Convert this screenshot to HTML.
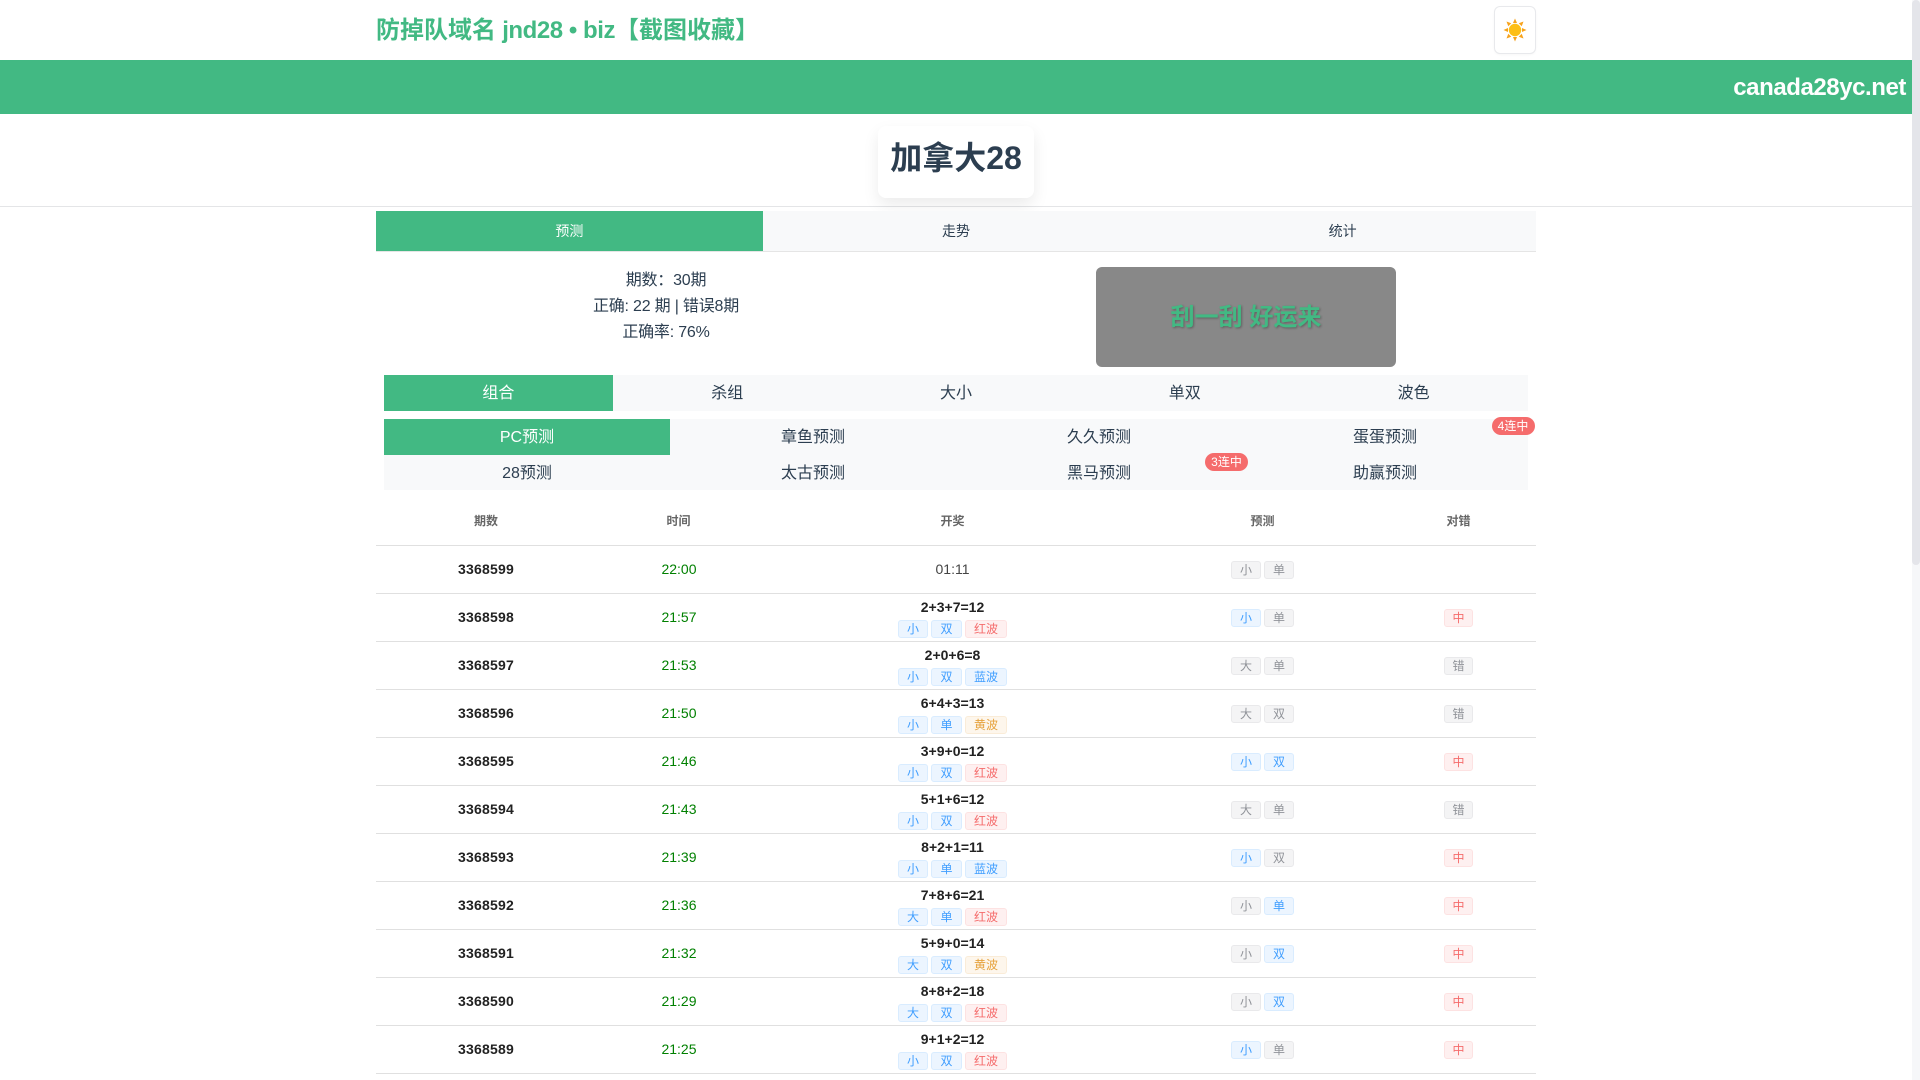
<!DOCTYPE html>
<html lang="zh">
<head>
<meta charset="utf-8">
<title>加拿大28</title>
<style>
*{box-sizing:border-box;margin:0;padding:0}
html,body{width:1920px;height:1080px;overflow:hidden;background:#fff}
body{position:relative;font-family:"Liberation Sans","Noto Sans CJK SC",sans-serif;color:#2c3e50;font-size:14px}
.abs{position:absolute}
.brand{left:376px;top:13px;height:36px;line-height:36px;font-size:24px;font-weight:700;color:#42b983;white-space:nowrap}
.brand span{letter-spacing:-.45px}
.sunbtn{left:1494px;top:6px;width:42px;height:48px;border:1px solid #e8e9ec;border-radius:6px;background:#fff;box-shadow:0 1px 2px rgba(0,0,0,.03)}
.sunbtn svg{position:absolute;left:8px;top:11px}
.bar{left:0;top:60px;width:1912px;height:54px;background:#42b983;color:#fff;font-weight:700;font-size:24px;line-height:56px;text-align:right;padding-right:6px;letter-spacing:-.43px}
.hr{left:0;top:206px;width:1912px;height:1px;background:#e4e5e7}
.card{left:878px;top:126px;width:156px;height:72px;background:#fff;border-radius:8px;box-shadow:0 7px 16px rgba(0,0,0,.08);text-align:center;font-size:32px;font-weight:700;line-height:65px;color:#2c3e50;white-space:nowrap}
.tabs{left:376px;top:211px;width:1160px;height:41px;display:flex;background:#f8f9fa;border-bottom:1px solid #e5e5e5}
.tabs div{flex:1;text-align:center;line-height:41px;font-size:14px;height:40px}
.on{background:#42b983;color:#fff}
.stats{left:376px;top:268px;width:580px;text-align:center;font-size:16px;line-height:26px;letter-spacing:-.2px}
.scratch{left:1096px;top:267px;width:300px;height:100px;background:#888;border-radius:6px;text-align:center;line-height:101px;font-size:24px;font-weight:700;color:#42b983;text-shadow:1px 1px 2px rgba(0,0,0,.3)}
.seg{left:384px;width:1144px;background:#f8f9fa;display:flex;flex-wrap:wrap;font-size:16px}
.seg div{text-align:center;height:36px;line-height:38px}
.s5 div{width:20%}
.s4 div{width:25%}
.s4 div.r2{height:35px}
.badge{height:18px;width:43px;border-radius:9px;background:#f56c6c;color:#fff;font-size:12px;line-height:18px;text-align:center}
.table{left:376px;top:497px;width:1160px}
.row{display:flex;height:48px;border-bottom:1px solid #e0e0e0;align-items:center;text-align:center;color:#222}
.row.head{height:49px;font-size:12px;font-weight:700;color:#666;padding-bottom:1px}
.c1{width:220px;font-weight:700}
.c2{width:165px}
.c3{width:383px}
.c4{width:237px}
.c5{width:155px}
.n{position:relative;top:-1px;letter-spacing:.2px}
.t{color:#008000;position:relative;top:-1px;left:.5px}
.row .c3{color:#444}
.row .c3.o{position:relative;top:-1px}
.res{font-weight:700;color:#222;line-height:20px}
.tags{display:flex;justify-content:center;gap:3.500px;height:18px;margin-top:3px}
.tags.solo{margin-top:0;gap:3.500px}
i{display:inline-block;font-style:normal;height:18px;line-height:16px;font-size:12px;padding:0 7.800px;border:1px solid;border-radius:3px}
.c3 i{padding:0 8px}
.b{background:#ecf5ff;border-color:#d9ecff;color:#409eff}
.r{background:#fef0f0;border-color:#fde2e2;color:#f56c6c}
.y{background:#fdf6ec;border-color:#faecd8;color:#e6a23c}
.g{background:#f4f4f5;border-color:#e9e9eb;color:#909399}
.track{left:1912px;top:0;width:8px;height:1080px;background:#f6f7f9}
.thumb{left:1912px;top:0;width:8px;height:565px;background:#e4e5ea;border-radius:4px}
</style>
</head>
<body>
<div class="abs brand">防掉队域名<span> jnd28 • biz</span>【截图收藏】</div>
<div class="abs sunbtn"><svg width="24" height="24" viewBox="0 0 24 24"><g fill="#f7a21b"><path d="M12 0.500L14 5H10Z"/><path d="M12 23.500L14 19H10Z"/><path d="M0.500 12L5 10V14Z"/><path d="M23.500 12L19 10V14Z"/><path d="M3.500 3.500L8.200 5.300L5.300 8.200Z"/><path d="M20.500 3.500L15.800 5.300L18.700 8.200Z"/><path d="M3.500 20.500L8.200 18.700L5.300 15.800Z"/><path d="M20.500 20.500L15.800 18.700L18.700 15.800Z"/></g><circle cx="12" cy="12" r="6.200" fill="#fdbf16"/></svg></div>
<div class="abs bar">canada28yc.net</div>
<div class="abs hr"></div>
<div class="abs card">加拿大28</div>
<div class="abs tabs"><div class="on">预测</div><div>走势</div><div>统计</div></div>
<div class="abs stats">期数：30期<br>正确: 22 期 | 错误8期<br>正确率: 76%</div>
<div class="abs scratch">刮一刮 好运来</div>
<div class="abs seg s5" style="top:375px;height:36px"><div class="on">组合</div><div>杀组</div><div>大小</div><div>单双</div><div>波色</div></div>
<div class="abs seg s4" style="top:419px;height:71px"><div class="on">PC预测</div><div>章鱼预测</div><div>久久预测</div><div>蛋蛋预测</div><div class="r2">28预测</div><div class="r2">太古预测</div><div class="r2">黑马预测</div><div class="r2">助赢预测</div></div>
<div class="abs badge" style="left:1491.500px;top:417px">4连中</div>
<div class="abs badge" style="left:1205px;top:453px">3连中</div>
<div class="abs table">
<div class="row head"><div class="c1" style="font-weight:700">期数</div><div class="c2">时间</div><div class="c3" style="color:#666">开奖</div><div class="c4">预测</div><div class="c5">对错</div></div>
<div class="row"><div class="c1"><span class="n">3368599</span></div><div class="c2 t">22:00</div><div class="c3 o">01:11</div><div class="c4"><div class="tags solo"><i class="g">小</i><i class="g">单</i></div></div><div class="c5"></div></div>
<div class="row"><div class="c1"><span class="n">3368598</span></div><div class="c2 t">21:57</div><div class="c3"><div class="res">2+3+7=12</div><div class="tags"><i class="b">小</i><i class="b">双</i><i class="r">红波</i></div></div><div class="c4"><div class="tags solo"><i class="b">小</i><i class="g">单</i></div></div><div class="c5"><div class="tags solo"><i class="r">中</i></div></div></div>
<div class="row"><div class="c1"><span class="n">3368597</span></div><div class="c2 t">21:53</div><div class="c3"><div class="res">2+0+6=8</div><div class="tags"><i class="b">小</i><i class="b">双</i><i class="b">蓝波</i></div></div><div class="c4"><div class="tags solo"><i class="g">大</i><i class="g">单</i></div></div><div class="c5"><div class="tags solo"><i class="g">错</i></div></div></div>
<div class="row"><div class="c1"><span class="n">3368596</span></div><div class="c2 t">21:50</div><div class="c3"><div class="res">6+4+3=13</div><div class="tags"><i class="b">小</i><i class="b">单</i><i class="y">黄波</i></div></div><div class="c4"><div class="tags solo"><i class="g">大</i><i class="g">双</i></div></div><div class="c5"><div class="tags solo"><i class="g">错</i></div></div></div>
<div class="row"><div class="c1"><span class="n">3368595</span></div><div class="c2 t">21:46</div><div class="c3"><div class="res">3+9+0=12</div><div class="tags"><i class="b">小</i><i class="b">双</i><i class="r">红波</i></div></div><div class="c4"><div class="tags solo"><i class="b">小</i><i class="b">双</i></div></div><div class="c5"><div class="tags solo"><i class="r">中</i></div></div></div>
<div class="row"><div class="c1"><span class="n">3368594</span></div><div class="c2 t">21:43</div><div class="c3"><div class="res">5+1+6=12</div><div class="tags"><i class="b">小</i><i class="b">双</i><i class="r">红波</i></div></div><div class="c4"><div class="tags solo"><i class="g">大</i><i class="g">单</i></div></div><div class="c5"><div class="tags solo"><i class="g">错</i></div></div></div>
<div class="row"><div class="c1"><span class="n">3368593</span></div><div class="c2 t">21:39</div><div class="c3"><div class="res">8+2+1=11</div><div class="tags"><i class="b">小</i><i class="b">单</i><i class="b">蓝波</i></div></div><div class="c4"><div class="tags solo"><i class="b">小</i><i class="g">双</i></div></div><div class="c5"><div class="tags solo"><i class="r">中</i></div></div></div>
<div class="row"><div class="c1"><span class="n">3368592</span></div><div class="c2 t">21:36</div><div class="c3"><div class="res">7+8+6=21</div><div class="tags"><i class="b">大</i><i class="b">单</i><i class="r">红波</i></div></div><div class="c4"><div class="tags solo"><i class="g">小</i><i class="b">单</i></div></div><div class="c5"><div class="tags solo"><i class="r">中</i></div></div></div>
<div class="row"><div class="c1"><span class="n">3368591</span></div><div class="c2 t">21:32</div><div class="c3"><div class="res">5+9+0=14</div><div class="tags"><i class="b">大</i><i class="b">双</i><i class="y">黄波</i></div></div><div class="c4"><div class="tags solo"><i class="g">小</i><i class="b">双</i></div></div><div class="c5"><div class="tags solo"><i class="r">中</i></div></div></div>
<div class="row"><div class="c1"><span class="n">3368590</span></div><div class="c2 t">21:29</div><div class="c3"><div class="res">8+8+2=18</div><div class="tags"><i class="b">大</i><i class="b">双</i><i class="r">红波</i></div></div><div class="c4"><div class="tags solo"><i class="g">小</i><i class="b">双</i></div></div><div class="c5"><div class="tags solo"><i class="r">中</i></div></div></div>
<div class="row"><div class="c1"><span class="n">3368589</span></div><div class="c2 t">21:25</div><div class="c3"><div class="res">9+1+2=12</div><div class="tags"><i class="b">小</i><i class="b">双</i><i class="r">红波</i></div></div><div class="c4"><div class="tags solo"><i class="b">小</i><i class="g">单</i></div></div><div class="c5"><div class="tags solo"><i class="r">中</i></div></div></div>
</div>
<div class="abs track"></div>
<div class="abs thumb"></div>
</body>
</html>
